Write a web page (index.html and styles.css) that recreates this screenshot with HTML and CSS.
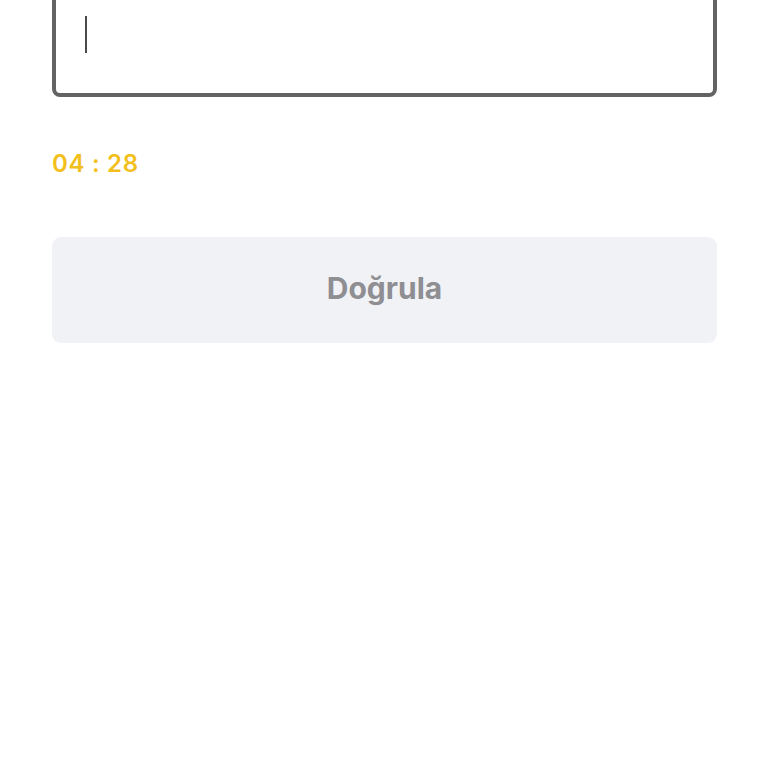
FILE: index.html
```html
<!DOCTYPE html>
<html lang="tr">
<head>
<meta charset="utf-8">
<link rel="stylesheet" href="styles.css">
</head>
<body>
<main class="page">
  <div class="code-box">
    <span class="caret"></span>
  </div>
  <div class="timer">04 : 28</div>
  <button class="verify">Doğrula</button>
</main>
</body>
</html>
```
FILE: styles.css
```css
html, body {
  margin: 0;
  padding: 0;
  background: #ffffff;
}
body {
  font-family: Inter, "Noto Sans", sans-serif;
}
.page {
  padding: 0 51px 0 52px;
  display: flex;
  flex-direction: column;
}
.code-box {
  margin-top: -44px;
  height: 141px;
  border: 4px solid #636363;
  border-radius: 8px;
  box-sizing: border-box;
  display: flex;
  align-items: flex-start;
  padding: 56px 0 0 29px;
}
.caret {
  display: block;
  width: 2px;
  height: 37px;
  background: #4a4a4a;
}
.timer {
  margin-top: 52px;
  font-size: 24px;
  line-height: 30px;
  font-weight: 600;
  color: #f2bf1c;
  letter-spacing: 0.7px;
}
.verify {
  margin-top: 58px;
  height: 106px;
  border: none;
  border-radius: 9px;
  background: #f1f2f5;
  color: #8e8e93;
  font-family: Inter, "Noto Sans", sans-serif;
  font-size: 30px;
  font-weight: 700;
  padding: 0 0 4px 0;
}
```
